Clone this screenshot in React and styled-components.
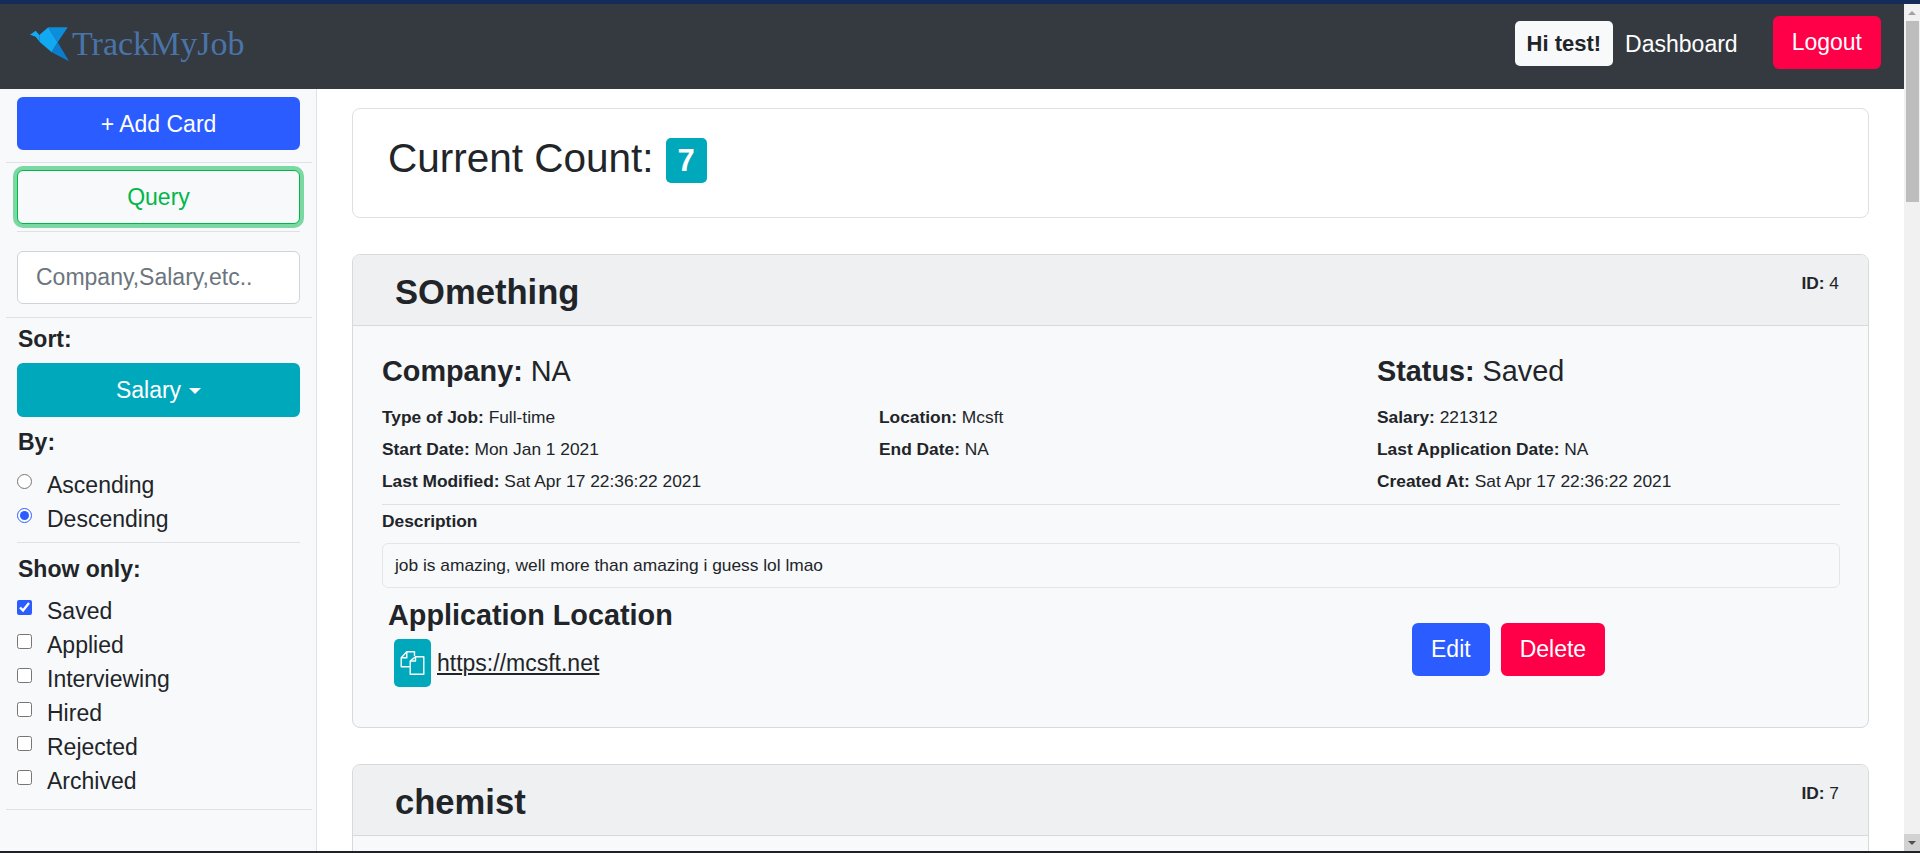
import styled, { createGlobalStyle } from "styled-components";

const GlobalStyle = createGlobalStyle`
  html, body {
    margin: 0;
    height: 100%;
    overflow: hidden;
    background: #fff;
  }
  * {
    box-sizing: border-box;
  }
`;

const Screen = styled.div`
  height: 853px;
  display: flex;
  flex-direction: column;
  font-family: "Liberation Sans", Arial, sans-serif;
  font-size: 23px;
  color: #212529;
`;
const TopStrip = styled.div`
  height: 4px;
  flex: none;
  background: #132c5c;
`;
const BottomStrip = styled.div`
  height: 2px;
  flex: none;
  background: #1f2124;
`;
const Shell = styled.div`
  flex: 1;
  min-height: 0;
  display: flex;
`;
const PageColumn = styled.div`
  flex: 1;
  min-width: 0;
  display: flex;
  flex-direction: column;
`;

const Scrollbar = styled.div`
  width: 16px;
  flex: none;
  background: #f1f1f1;
  display: flex;
  flex-direction: column;
  align-items: center;
`;
const ScrollButton = styled.div`
  width: 16px;
  height: 17px;
  flex: none;
  display: flex;
  align-items: center;
  justify-content: center;
  background: ${(p) => (p.$pressed ? "#d2d2d2" : "transparent")};
  &::after {
    content: "";
    border-left: 4px solid transparent;
    border-right: 4px solid transparent;
    ${(p) =>
      p.$down
        ? "border-top: 4px solid #505050;"
        : "border-bottom: 4px solid #a3a3a3;"}
  }
`;
const ScrollThumb = styled.div`
  width: 13px;
  height: 181px;
  background: #bdbdbd;
`;
const ScrollSpace = styled.div`
  flex: 1;
`;

const Nav = styled.nav`
  height: 85px;
  flex: none;
  background: #343a40;
  display: flex;
  align-items: flex-start;
  padding: 12px 23px 0 30px;
`;
const Brand = styled.div`
  display: flex;
  align-items: center;
  height: 50px;
  gap: 2px;
  margin-top: 3px;
`;
const BrandName = styled.span`
  font-family: "Liberation Serif", "Times New Roman", serif;
  font-size: 34px;
  color: #4a74a8;
`;
const NavRight = styled.div`
  margin-left: auto;
  display: flex;
  align-items: flex-start;
`;
const Greeting = styled.div`
  margin-top: 5px;
  height: 45px;
  padding: 0 12px;
  display: flex;
  align-items: center;
  border-radius: 5px;
  background: #f8f9fa;
  font-weight: 700;
  font-size: 22px;
`;
const NavLink = styled.a`
  margin: 5px 35px 0 12px;
  line-height: 47px;
  color: #fff;
`;

const Button = styled.button`
  display: block;
  border: 2px solid ${(p) => p.$bg};
  border-radius: 6px;
  background: ${(p) => p.$bg};
  color: #fff;
  font-family: inherit;
  font-size: 23px;
  padding: ${(p) => p.$pt || 0}px ${(p) => p.$pad || 0}px 0;
  height: ${(p) => p.$h || 53}px;
  margin-top: ${(p) => p.$mt || 0}px;
`;
const QueryButton = styled(Button)`
  background: #f8f9fa;
  color: #00b74a;
  border: 1px solid #00b74a;
  box-shadow: 0 0 0 4px rgba(0, 183, 74, 0.5);
  position: relative;
`;
const Caret = styled.span`
  display: inline-block;
  margin-left: 8px;
  vertical-align: 4px;
  border-top: 6px solid #fff;
  border-left: 6.5px solid transparent;
  border-right: 6.5px solid transparent;
`;

const Body = styled.div`
  flex: 1;
  min-height: 0;
  display: flex;
`;
const Sidebar = styled.aside`
  width: 317px;
  flex: none;
  background: #f8f9fa;
  border-right: 1px solid #dee2e6;
  padding: 8px 16px 0 17px;
  display: flex;
  flex-direction: column;
  align-items: stretch;
`;
const Divider = styled.div`
  height: 1px;
  flex: none;
  background: #dee2e6;
  margin: ${(p) => p.$mt}px ${(p) => (p.$wide ? "-12px" : "0")} 0
    ${(p) => (p.$wide ? "-11px" : "0")};
`;
const SearchInput = styled.input`
  height: 53px;
  margin-top: 19px;
  padding: 0 18px;
  border: 1px solid #ced4da;
  border-radius: 6px;
  background: #fff;
  font-family: inherit;
  font-size: 23px;
  color: #212529;
  &::placeholder {
    color: #6c757d;
    opacity: 1;
  }
`;
const SideLabel = styled.div`
  font-weight: 700;
  line-height: 30px;
  margin-top: ${(p) => p.$mt}px;
  padding-left: 1px;
`;
const OptionList = styled.div`
  margin-top: ${(p) => p.$mt}px;
  display: flex;
  flex-direction: column;
`;
const Option = styled.label`
  height: 34px;
  padding-top: 6px;
  display: flex;
  align-items: center;
  gap: 15px;
  input {
    width: 15px;
    height: 15px;
    margin: 0 0 8px;
    flex: none;
    accent-color: #2b5cff;
  }
`;

const Main = styled.main`
  flex: 1;
  min-width: 0;
  overflow: hidden;
  padding: 19px 35px 0;
`;
const CountCard = styled.section`
  height: 110px;
  border: 1px solid #dfdfdf;
  border-radius: 8px;
  padding: 29px 35px 0;
  display: flex;
  align-items: flex-start;
  gap: 12px;
`;
const CountText = styled.h2`
  margin: -2px 0 0;
  font-size: 40.5px;
  font-weight: 400;
  line-height: 45px;
`;
const Badge = styled.span`
  width: 41px;
  height: 45px;
  border-radius: 5px;
  background: #00a8bc;
  color: #fff;
  font-weight: 700;
  font-size: 31px;
  display: flex;
  align-items: center;
  justify-content: center;
`;

const JobCard = styled.article`
  margin-top: ${(p) => p.$mt}px;
  border: 1px solid #d8d9da;
  border-radius: 8px;
  background: #f8f9fa;
  overflow: hidden;
`;
const JobHeader = styled.header`
  height: 71px;
  background: #eff0f2;
  border-bottom: 1px solid #d8d9da;
  display: flex;
  justify-content: space-between;
  padding: 0 29px 0 42px;
`;
const JobTitle = styled.h3`
  margin: 0;
  font-size: 34.6px;
  font-weight: 700;
  line-height: 74px;
`;
const JobId = styled.div`
  font-size: 17.35px;
  line-height: 24px;
  margin-top: 16px;
`;
const JobBody = styled.div`
  padding: 28px 28px 40px 29px;
`;
const SmallGrid = styled.div`
  display: grid;
  grid-template-columns: 497px 498px 1fr;
  margin-top: ${(p) => p.$mt || 0}px;
`;
const BigField = styled.div`
  font-size: 28.8px;
  line-height: 34px;
`;
const Field = styled.div`
  font-size: 17.35px;
  line-height: 32px;
`;
const Rule = styled.div`
  height: 1px;
  margin-top: 7px;
  background: #dee2e6;
`;
const DescLabel = styled.div`
  font-size: 17.35px;
  font-weight: 700;
  line-height: 26px;
  margin-top: 3px;
`;
const DescBox = styled.div`
  height: 45px;
  margin-top: 9px;
  padding: 0 12px;
  display: flex;
  align-items: center;
  border: 1px solid #e3e5e8;
  border-radius: 6px;
  font-size: 17.35px;
`;
const LowerRow = styled.div`
  margin-top: 10px;
  display: grid;
  grid-template-columns: 1030px 1fr;
`;
const AppTitle = styled.div`
  font-size: 28.8px;
  font-weight: 700;
  line-height: 34px;
  margin-left: 6px;
`;
const LinkRow = styled.div`
  margin: 7px 0 0 12px;
  display: flex;
  align-items: center;
  gap: 6px;
`;
const CopyButton = styled.div`
  width: 37px;
  height: 48px;
  border-radius: 5px;
  background: #00a8bc;
  display: flex;
  align-items: center;
  justify-content: center;
`;
const JobLink = styled.a`
  font-size: 23px;
  color: #212529;
  text-decoration: underline;
`;
const Actions = styled.div`
  margin-top: 25px;
  display: flex;
  align-items: flex-start;
  gap: 11px;
`;

const BirdLogo = () => (
  <svg width="40" height="36" viewBox="0 0 40 36">
    <polygon points="0,8.7 5.7,4.7 9.3,9 10,16.3 5.7,10.7" fill="#12aaf0" />
    <polygon points="9.3,9 18.3,1.3 27.7,16.3 21.7,26.3 10,16.3" fill="#12a8f2" />
    <polygon points="18.3,1.3 37.7,1.3 27.7,16.3" fill="#0c8edc" />
    <polygon points="27.7,16.3 39,35.3 21.7,26.3" fill="#0a7dcc" />
  </svg>
);

const CopyIcon = () => (
  <svg width="25" height="24" viewBox="0 0 25 24" fill="none" stroke="#fff" strokeWidth="1.4" strokeLinejoin="round">
    <path d="M9.8 15.7 H1.2 V6.7 L6.8 0.7 H14.5 V5" />
    <path d="M6.8 0.7 V6.7 H1.2" />
    <path d="M10.2 10 L15.5 5.7 H23.8 V23.3 H10.2 Z" />
    <path d="M15.5 5.7 V10 H10.2" />
  </svg>
);

const statuses = [
  ["Saved", true],
  ["Applied", false],
  ["Interviewing", false],
  ["Hired", false],
  ["Rejected", false],
  ["Archived", false],
];

const App = () => {
  return (
    <Screen>
      <GlobalStyle />
      <TopStrip />
      <Shell>
        <PageColumn>
          <Nav>
            <Brand>
              <BirdLogo />
              <BrandName>TrackMyJob</BrandName>
            </Brand>
            <NavRight>
              <Greeting>Hi test!</Greeting>
              <NavLink>Dashboard</NavLink>
              <Button $bg="#ff0048" $pad={17}>
                Logout
              </Button>
            </NavRight>
          </Nav>
          <Body>
            <Sidebar>
              <Button $bg="#2b5cff" $pt={2}>
                + Add Card
              </Button>
              <Divider $wide $mt={12} />
              <QueryButton $bg="#00b74a" $h={54} $mt={7}>
                Query
              </QueryButton>
              <Divider $mt={7} />
              <SearchInput placeholder="Company,Salary,etc.." />
              <Divider $wide $mt={13} />
              <SideLabel $mt={6}>Sort:</SideLabel>
              <Button $bg="#00a8bc" $h={54} $mt={9}>
                Salary
                <Caret />
              </Button>
              <SideLabel $mt={10}>By:</SideLabel>
              <OptionList $mt={8}>
                <Option>
                  <input type="radio" name="order" />
                  Ascending
                </Option>
                <Option>
                  <input type="radio" name="order" defaultChecked />
                  Descending
                </Option>
              </OptionList>
              <Divider $mt={9} />
              <SideLabel $mt={11}>Show only:</SideLabel>
              <OptionList $mt={7}>
                {statuses.map(([label, checked]) => (
                  <Option key={label}>
                    <input type="checkbox" defaultChecked={checked} />
                    {label}
                  </Option>
                ))}
              </OptionList>
              <Divider $wide $mt={14} />
            </Sidebar>
            <Main>
              <CountCard>
                <CountText>Current Count:</CountText>
                <Badge>7</Badge>
              </CountCard>

              <JobCard $mt={36}>
                <JobHeader>
                  <JobTitle>SOmething</JobTitle>
                  <JobId>
                    <b>ID:</b> 4
                  </JobId>
                </JobHeader>
                <JobBody>
                  <SmallGrid>
                    <BigField>
                      <b>Company:</b> NA
                    </BigField>
                    <span />
                    <BigField>
                      <b>Status:</b> Saved
                    </BigField>
                  </SmallGrid>
                  <SmallGrid $mt={13}>
                    <Field>
                      <b>Type of Job:</b> Full-time
                    </Field>
                    <Field>
                      <b>Location:</b> Mcsft
                    </Field>
                    <Field>
                      <b>Salary:</b> 221312
                    </Field>
                    <Field>
                      <b>Start Date:</b> Mon Jan 1 2021
                    </Field>
                    <Field>
                      <b>End Date:</b> NA
                    </Field>
                    <Field>
                      <b>Last Application Date:</b> NA
                    </Field>
                    <Field>
                      <b>Last Modified:</b> Sat Apr 17 22:36:22 2021
                    </Field>
                    <span />
                    <Field>
                      <b>Created At:</b> Sat Apr 17 22:36:22 2021
                    </Field>
                  </SmallGrid>
                  <Rule />
                  <DescLabel>Description</DescLabel>
                  <DescBox>job is amazing, well more than amazing i guess lol lmao</DescBox>
                  <LowerRow>
                    <div>
                      <AppTitle>Application Location</AppTitle>
                      <LinkRow>
                        <CopyButton>
                          <CopyIcon />
                        </CopyButton>
                        <JobLink>https://mcsft.net</JobLink>
                      </LinkRow>
                    </div>
                    <Actions>
                      <Button $bg="#2b5cff" $pad={17}>
                        Edit
                      </Button>
                      <Button $bg="#ff0048" $pad={17}>
                        Delete
                      </Button>
                    </Actions>
                  </LowerRow>
                </JobBody>
              </JobCard>

              <JobCard $mt={36}>
                <JobHeader>
                  <JobTitle>chemist</JobTitle>
                  <JobId>
                    <b>ID:</b> 7
                  </JobId>
                </JobHeader>
                <JobBody />
              </JobCard>
            </Main>
          </Body>
        </PageColumn>
        <Scrollbar>
          <ScrollButton />
          <ScrollThumb />
          <ScrollSpace />
          <ScrollButton $down $pressed />
        </Scrollbar>
      </Shell>
      <BottomStrip />
    </Screen>
  );
};

export default App;
